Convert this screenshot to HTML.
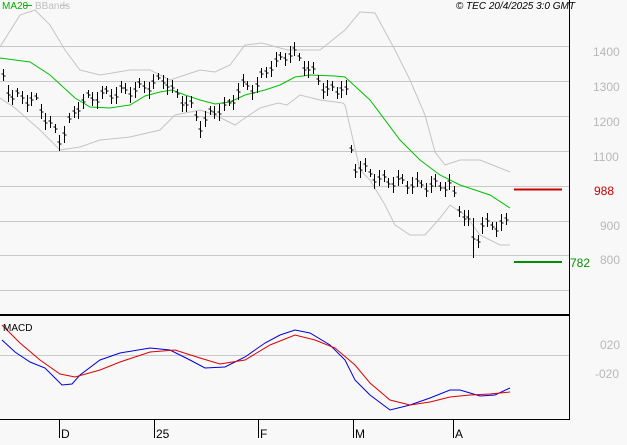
<!DOCTYPE html><html><head><meta charset="utf-8"><style>
body{margin:0;background:#f8f8f8;width:627px;height:440px;overflow:hidden}
text{font-family:"Liberation Sans",sans-serif}
</style></head><body>
<svg id="s" width="627" height="440" viewBox="0 0 627 440" xmlns="http://www.w3.org/2000/svg">
<rect width="627" height="440" fill="#f8f8f8"/>
<g stroke="#c8c8c8" stroke-width="1">
<line x1="0" y1="46.5" x2="569" y2="46.5"/><line x1="0" y1="81.5" x2="569" y2="81.5"/><line x1="0" y1="116.5" x2="569" y2="116.5"/><line x1="0" y1="151.5" x2="569" y2="151.5"/><line x1="0" y1="186.5" x2="569" y2="186.5"/><line x1="0" y1="221.5" x2="569" y2="221.5"/><line x1="0" y1="255.5" x2="569" y2="255.5"/><line x1="0" y1="290.5" x2="569" y2="290.5"/><line x1="0" y1="355.5" x2="569" y2="355.5"/>
</g>
<g fill="none" stroke="#c4c4c4" stroke-width="1">
<polyline points="0,47 20,15 35,10 50,25 65,50 80,70 100,75 130,70 150,70 170,80 200,70 215,72 230,65 245,45 262,43 280,48 288,50 300,50 320,50 345,30 360,12 375,13 395,50 410,80 425,115 435,152 445,165 460,160 480,160 510,172"/>
<polyline points="0,98 15,108 40,130 60,150 80,147 100,140 130,137 160,130 175,115 200,110 215,115 235,125 245,118 260,108 278,103 287,105 300,95 320,100 343,103 345,105 360,170 370,180 385,205 395,225 410,235 425,235 440,218 450,205 465,215 480,235 500,245 510,245"/>
</g>
<polyline fill="none" stroke="#00c000" stroke-width="1" points="0,58 30,62 50,75 75,98 90,107 110,108 130,105 145,96 160,92 172,90 185,95 200,100 215,104 230,102 245,95 265,90 280,85 295,77 310,75 335,76 345,77 370,100 400,140 420,160 440,175 460,185 490,195 510,208"/>
<path id="bars" fill="none" stroke="#000" stroke-width="1"/>
<line x1="514" y1="189.5" x2="562" y2="189.5" stroke="#cc0000" stroke-width="2"/>
<line x1="514" y1="262" x2="562" y2="262" stroke="#009000" stroke-width="2"/>
<polyline fill="none" stroke="#0000dd" stroke-width="1" points="2,340 15,352 30,362 45,368 55,378 62,385 72,384 80,375 100,360 120,353 150,348 170,350 190,360 205,368 225,367 245,357 265,343 280,335 295,330 310,333 330,345 345,360 355,380 370,395 390,410 410,405 430,398 450,390 460,390 470,393 480,396 495,395 510,388"/>
<polyline fill="none" stroke="#dd0000" stroke-width="1" points="2,325 20,343 40,360 60,374 75,377 100,370 120,362 150,352 175,350 200,358 220,364 245,360 270,345 295,335 315,340 335,348 355,365 370,383 390,400 410,405 430,402 450,397 470,395 490,394 510,392"/>
<line x1="0" y1="315" x2="569" y2="315" stroke="#000" stroke-width="2"/>
<line x1="569.5" y1="0" x2="569.5" y2="420" stroke="#000" stroke-width="1"/>
<line x1="0" y1="419.5" x2="570" y2="419.5" stroke="#000" stroke-width="1"/>
<g stroke="#000"><line x1="59.5" y1="420" x2="59.5" y2="438"/><line x1="154.5" y1="420" x2="154.5" y2="438"/><line x1="258.5" y1="420" x2="258.5" y2="438"/><line x1="353.5" y1="420" x2="353.5" y2="438"/><line x1="453.5" y1="420" x2="453.5" y2="438"/></g>
<g font-size="12" fill="#000"><text x="61" y="438">D</text><text x="156" y="438">25</text><text x="260" y="438">F</text><text x="355" y="438">M</text><text x="455" y="438">A</text></g>
<g font-size="12" fill="#b8b8b8"><text x="593" y="56">1400</text><text x="593" y="91">1300</text><text x="593" y="126">1200</text><text x="593" y="161">1100</text><text x="600" y="230">900</text><text x="600" y="264">800</text><text x="600" y="349">020</text><text x="595" y="378">-020</text></g>
<text x="594" y="195" font-size="12" fill="#cc0000">988</text>
<text x="570" y="267" font-size="12" fill="#009000">782</text>
<text x="2" y="9" font-size="10" fill="#00b000">MA20</text><line x1="24" y1="5.5" x2="32" y2="5.5" stroke="#00b000"/>
<text x="35" y="9" font-size="10" fill="#c0c0c0">BBands</text><line x1="60" y1="5.5" x2="68" y2="5.5" stroke="#c0c0c0"/>
<text x="575" y="9" font-size="10" font-style="italic" text-anchor="end" fill="#000">© TEC 20/4/2025 3:0 GMT</text>
<text x="3" y="331" font-size="10" fill="#000">MACD</text>
</svg>
<script>
var k=[[3,78],[10,95],[20,98],[35,100],[50,125],[60,140],[70,120],[80,102],[100,95],[130,90],[150,85],[165,78],[175,95],[190,105],[200,125],[215,110],[230,105],[240,85],[255,88],[270,65],[280,60],[292,50],[300,60],[315,75],[325,90],[340,90],[345,75],[348,120],[352,165],[365,170],[380,180],[400,182],[420,185],[440,185],[450,185],[460,210],[470,225],[475,250],[480,225],[490,225],[500,225],[510,222]];
function f(x){for(var i=1;i<k.length;i++){if(x<=k[i][0]){var a=k[i-1],b=k[i];return a[1]+(b[1]-a[1])*(x-a[0])/(b[0]-a[0]);}}return 222;}
var d="",s=7;
for(var x=3;x<=510;x+=4.7){var xx=Math.round(x)+0.5;var c=f(x)+Math.sin(s++*1.7)*5;var h=7+Math.abs(Math.sin(s*2.3))*10;if(x>470&&x<475)h=40;d+="M"+xx+" "+(c-h/2).toFixed(0)+"V"+(c+h/2).toFixed(0)+"M"+(xx-2)+" "+(c-1).toFixed(0)+"h2M"+xx+" "+(c+1).toFixed(0)+"h2";}
document.getElementById("bars").setAttribute("d",d);
</script>
</body></html>
